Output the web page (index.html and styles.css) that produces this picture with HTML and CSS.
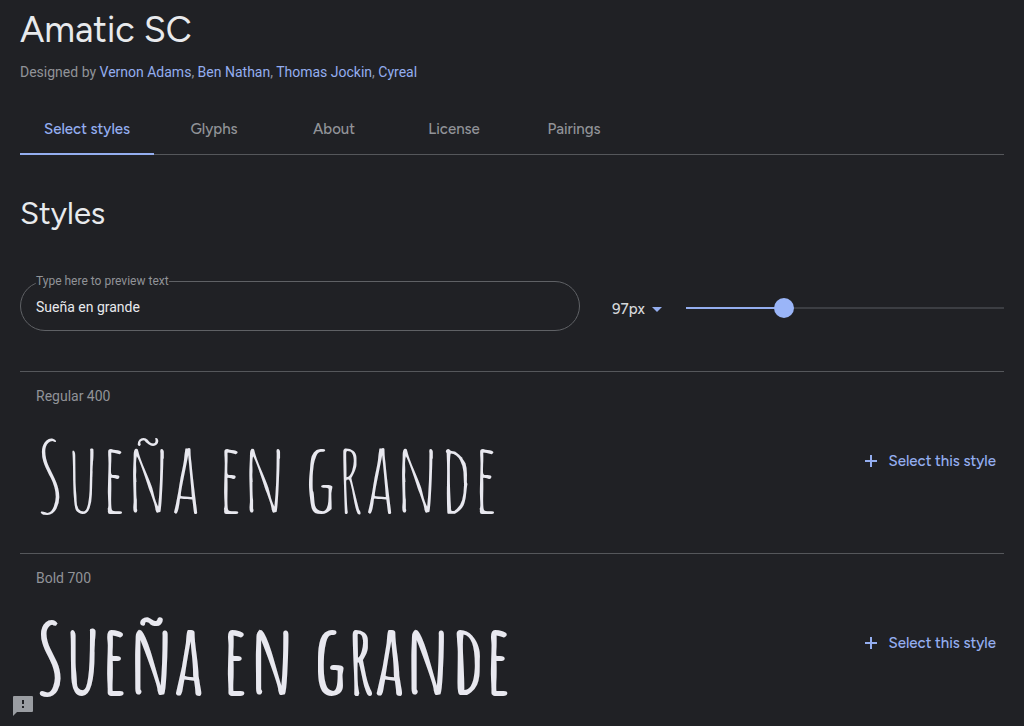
FILE: index.html
```html
<!DOCTYPE html>
<html lang="en">
<head>
<meta charset="utf-8">
<meta name="viewport" content="width=device-width, initial-scale=1">
<title>Amatic SC</title>
<link rel="stylesheet" href="styles.css">
</head>
<body>
<main class="page">
  <header class="family">
    <h1 class="family-name">Amatic SC</h1>
    <p class="designers">Designed by <a href="#">Vernon Adams</a>, <a href="#">Ben Nathan</a>, <a href="#">Thomas Jockin</a>, <a href="#">Cyreal</a></p>
  </header>
  <nav class="tabs">
    <a class="tab tab-active" href="#styles" aria-current="page">Select styles</a>
    <a class="tab" href="#glyphs">Glyphs</a>
    <a class="tab" href="#about">About</a>
    <a class="tab" href="#license">License</a>
    <a class="tab" href="#pairings">Pairings</a>
  </nav>
  <h2 class="section-title" id="styles">Styles</h2>
  <form class="controls">
    <fieldset class="field">
      <legend class="field-legend"><label for="preview">Type here to preview text</label></legend>
      <input class="field-input" id="preview" type="text" value="Sueña en grande">
    </fieldset>
    <div class="size">
      <select class="size-select" aria-label="Font size">
        <option>97px</option>
        <option>64px</option>
        <option>48px</option>
      </select>
      <svg class="size-arrow" viewBox="0 0 10 5" aria-hidden="true"><path d="M0 0h10L5 5z"/></svg>
    </div>
    <div class="slider-box">
      <input class="slider" type="range" min="8" max="310" value="97" aria-label="Preview size">
    </div>
  </form>
  <section class="style-row">
    <h3 class="style-name">Regular 400</h3>
    <p class="sample sample-regular">Sueña en grande</p>
    <button class="select-style" type="button">
      <svg class="plus" viewBox="0 0 12 12" aria-hidden="true"><path d="M6 0v12M0 6h12"/></svg>
      Select this style
    </button>
  </section>
  <section class="style-row">
    <h3 class="style-name">Bold 700</h3>
    <p class="sample sample-bold">Sueña en grande</p>
    <button class="select-style" type="button">
      <svg class="plus" viewBox="0 0 12 12" aria-hidden="true"><path d="M6 0v12M0 6h12"/></svg>
      Select this style
    </button>
  </section>
</main>
<button class="feedback" type="button" aria-label="Send feedback">
  <svg viewBox="0 0 20 20" aria-hidden="true"><path class="bubble" d="M1 0h18q1 0 1 1v14q0 1-1 1H4l-4 4V1q0-1 1-1z"/><path class="mark" d="M9 4h2v4H9zM9 10h2v2H9z"/></svg>
</button>
</body>
</html>
```
FILE: styles.css
```css
* {
  box-sizing: border-box;
}

body {
  margin: 0;
  background: #202125;
  color: #e8eaed;
  font: 14px/20px Roboto, sans-serif;
}

h1, h2, h3, p {
  margin: 0;
  font-weight: 400;
}

a {
  color: #94aef0;
  text-decoration: none;
}

button {
  border: 0;
  padding: 0;
  background: none;
  cursor: pointer;
}

.page {
  padding: 8px 20px 0;
}

.family-name {
  font-family: "Google Sans", "Product Sans", Figtree, Roboto, sans-serif;
  font-size: 36px;
  line-height: 44px;
}

.designers {
  margin-top: 10px;
  color: #919398;
}

.tabs {
  display: flex;
  margin-top: 22px;
  border-bottom: 1px solid #55575b;
}

.tab {
  min-width: 120px;
  margin-bottom: -1px;
  padding: 15px 24px 14px;
  border-bottom: 2px solid transparent;
  color: #919398;
  font-family: "Google Sans", "Product Sans", Figtree, Inter, sans-serif;
  font-size: 15px;
  font-weight: 500;
  text-align: center;
}

.tab-active {
  border-color: #94aef0;
  color: #94aef0;
}

.section-title {
  margin-top: 39px;
  font-family: "Google Sans", "Product Sans", Figtree, Roboto, sans-serif;
  font-size: 31px;
  line-height: 40px;
}

.controls {
  display: grid;
  grid-template-columns: 560fr 58px 318fr;
  align-items: center;
  column-gap: 24px;
  padding: 39px 0 40px;
}

.field {
  min-width: 0;
  margin: 0;
  padding: 0 15px 6px;
  border: 1px solid #5f6165;
  border-radius: 28px;
}

.field-legend {
  padding: 0;
  color: #919398;
  font-size: 12px;
  line-height: 16px;
}

.field-input {
  display: block;
  width: 100%;
  height: 35px;
  padding: 0;
  border: 0;
  outline: 0;
  background: none;
  color: #e8eaed;
  font: inherit;
}

.size {
  display: grid;
  align-items: center;
  padding: 14px 0 0 8px;
}

.size-select {
  grid-area: 1 / 1;
  padding: 0;
  border: 0;
  appearance: none;
  background: none;
  color: #d5d7da;
  font: 500 15px/20px "Google Sans", "Product Sans", Figtree, Inter, sans-serif;
}

.size-arrow {
  grid-area: 1 / 1;
  justify-self: end;
  width: 10px;
  height: 5px;
  fill: #94aef0;
  pointer-events: none;
}

.slider-box {
  display: flex;
  padding-top: 12px;
}

.slider {
  width: 100%;
  height: 20px;
  margin: 0;
  appearance: none;
  background: linear-gradient(90deg, #94aef0 31%, #3c3e43 31%) center / 100% 2px no-repeat;
}

.slider::-webkit-slider-thumb {
  width: 20px;
  height: 20px;
  border-radius: 50%;
  appearance: none;
  background: #9ab5f8;
}

.style-row {
  display: grid;
  grid-template-columns: 1fr auto;
  align-items: center;
  padding: 14px 8px 35px 16px;
  border-top: 1px solid #55575b;
}

.style-name {
  grid-column: 1 / 3;
  color: #919398;
  font-size: 14px;
  line-height: 20px;
}

.sample {
  padding-top: 27px;
  color: #e8e8ef;
  font-family: "Amatic SC", "Roboto Condensed", Roboto, sans-serif;
  font-size: 97px;
  line-height: 85px;
  white-space: nowrap;
}

.sample-regular {
  font-weight: 400;
}

.sample-bold {
  font-weight: 700;
}

.select-style {
  display: flex;
  align-items: center;
  align-self: start;
  gap: 12px;
  margin-top: 45px;
  color: #94aef0;
  font: 500 15px/20px "Google Sans", "Product Sans", Figtree, Inter, sans-serif;
}

.plus {
  width: 12px;
  height: 12px;
  fill: none;
  stroke: #94aef0;
  stroke-width: 2;
}

.feedback {
  position: fixed;
  bottom: 10px;
  left: 13px;
  width: 20px;
  height: 20px;
}

.feedback svg {
  display: block;
}

.bubble {
  fill: #9a9da2;
}

.mark {
  fill: #202125;
}
```
